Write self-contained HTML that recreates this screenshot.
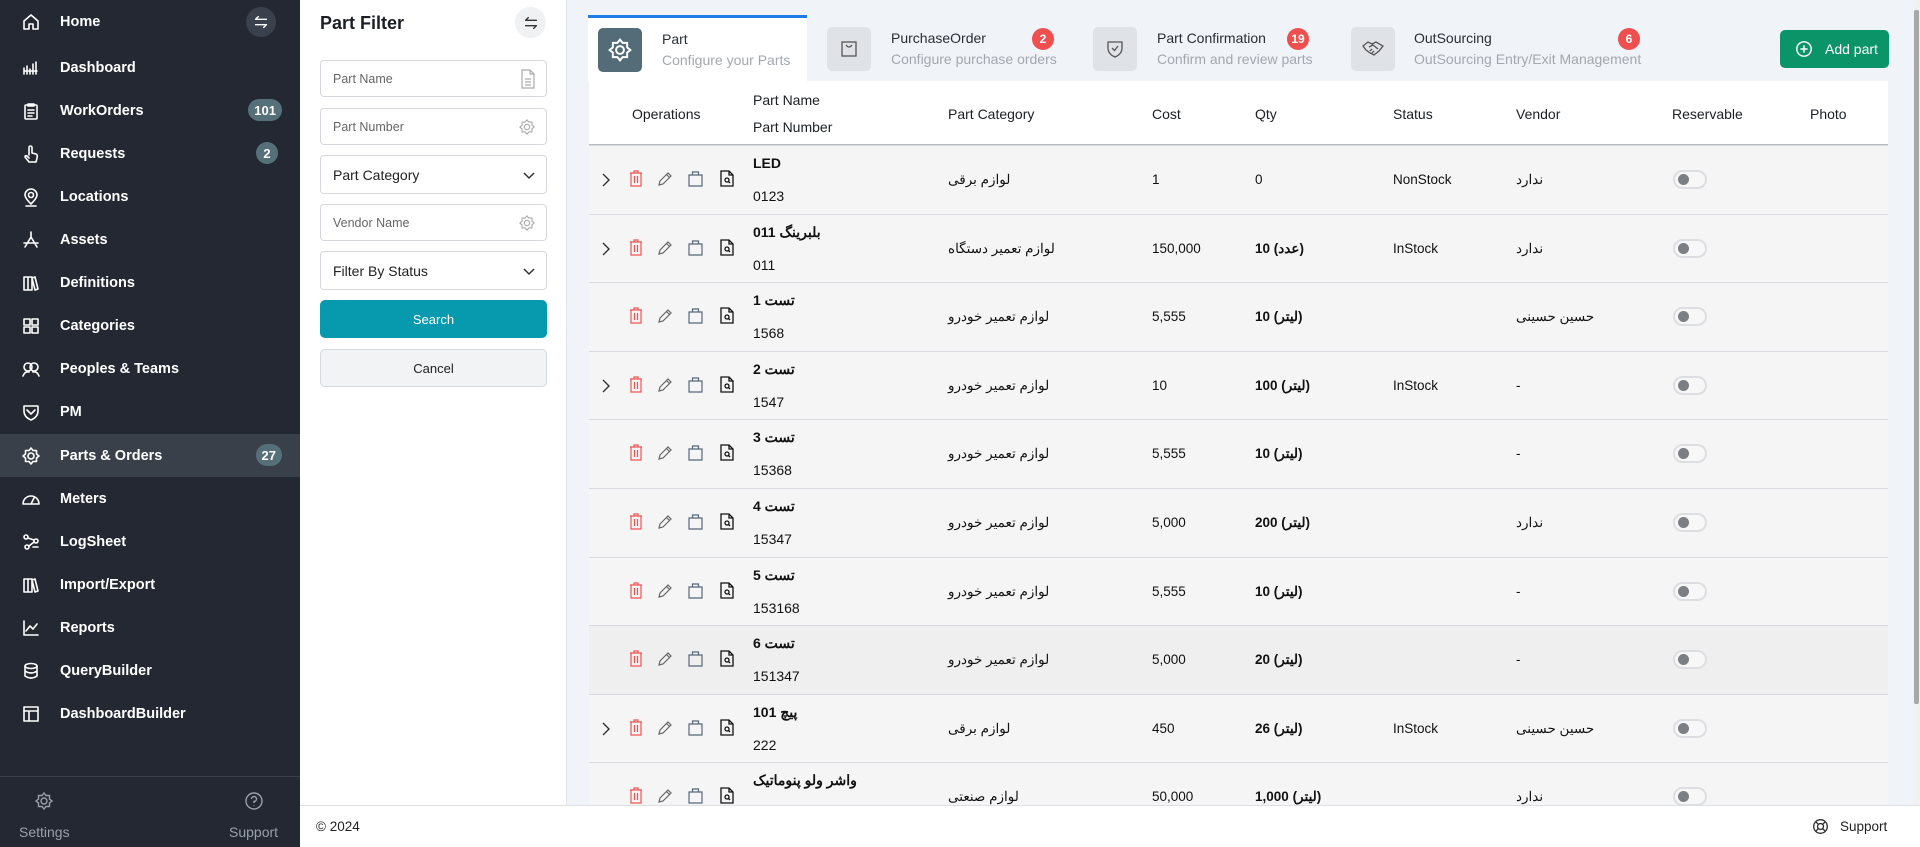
<!DOCTYPE html>
<html><head><meta charset="utf-8">
<style>
*{box-sizing:border-box;margin:0;padding:0}
body{width:1920px;height:847px;overflow:hidden;font-family:"Liberation Sans","Noto Sans CJK SC",sans-serif;background:#f0f3f8;position:relative;color:#111}
.abs{position:absolute}
#side{left:0;top:0;width:300px;height:847px;background:#232833;color:#fff}
.si{position:absolute;left:0;width:300px;height:43px;display:flex;align-items:center;font-weight:bold;font-size:14.5px}
.si svg{position:absolute;left:21px;width:20px;height:20px;fill:none;stroke:#fff;stroke-width:1.6;stroke-linecap:round;stroke-linejoin:round}
.si span.t{position:absolute;left:60px}
.badge{position:absolute;right:22px;height:22px;min-width:22px;border-radius:11px;background:#56707a;color:#fff;font-size:13px;font-weight:bold;display:flex;align-items:center;justify-content:center;padding:0 6px}
#filter{left:300px;top:0;width:267px;height:805px;background:#fff;border-right:1px solid #e3e6ea}
.inp{position:absolute;left:20px;width:227px;border:1px solid #d5d8dc;border-radius:4px;background:#fff;font-size:12.5px;color:#666;display:flex;align-items:center;padding-left:12px}
.sel{font-size:14px;color:#222}
.inp svg{position:absolute;right:10px}
.tab{position:absolute;top:16px;height:66px}
.ib{position:absolute;top:11px;width:44px;height:44px;border-radius:5px;background:#dfe2e7;display:flex;align-items:center;justify-content:center}
.tt{position:absolute;top:14px;font-size:14px;color:#2a2f36}
.ts{position:absolute;top:35px;font-size:14px;color:#a3a8ae;white-space:nowrap}
.rb{position:absolute;top:12px;width:22px;height:22px;border-radius:11px;background:#ef4f4f;color:#fff;font-size:12px;font-weight:bold;display:flex;align-items:center;justify-content:center}
#table{left:589px;top:81px;width:1299px;height:724px;background:#fff;overflow:hidden}
.th{position:absolute;font-size:14px;color:#1b1f24}
.row{position:absolute;left:0;width:1299px;height:69px;background:#f5f5f6;border-top:1px solid #d9dbe0;font-size:13.5px}
.row .c{position:absolute;top:26px;white-space:nowrap}
.row .nm{position:absolute;left:164px;top:9px;font-weight:bold;font-size:14px;white-space:nowrap}
.row .nb{position:absolute;left:164px;top:42px;font-size:14px}
.ic{position:absolute;top:24px}
.tog{position:absolute;left:1084px;top:24px;width:34px;height:19px;border:2px solid #dcdee2;border-radius:10px;background:#f7f7f7}
.tog:after{content:"";position:absolute;left:3px;top:2px;width:11px;height:11px;border-radius:6px;background:#7b7e83}
.in{display:inline-block}
</style></head><body>

<div id="side" class="abs">
 <div class="si" style="top:0"><svg viewBox="0 0 20 20"><path d="M3 9L10 3L17 9V17H12V12H8V17H3Z"/></svg><span class="t">Home</span>
  <div class="abs" style="left:246px;top:7px;width:30px;height:30px;border-radius:15px;background:#3b414c;display:flex;align-items:center;justify-content:center"><svg viewBox="0 0 20 20" style="position:static;width:18px;height:18px"><path d="M4 7H16M4 7L7 4M16 13H4M16 13L13 16"/></svg></div></div>
 <div class="si" style="top:46px"><svg viewBox="0 0 20 20"><path d="M3 16V10M6 16V8M9 16V11M12 16V6M15 16V4M3 13H16"/></svg><span class="t">Dashboard</span></div>
 <div class="si" style="top:89px"><svg viewBox="0 0 20 20"><rect x="4" y="4" width="12" height="14" rx="1"/><path d="M7 3H13V5H7ZM7 9H13M7 12H13M7 15H11"/></svg><span class="t">WorkOrders</span><div class="badge" style="top:10px;right:18px">101</div></div>
 <div class="si" style="top:132px"><svg viewBox="0 0 20 20"><path d="M8 11V3.5A1.5 1.5 0 0 1 11 3.5V9L15 10Q17 11 16 14L15 18H8L4 13Q4 11 6 12L8 14"/></svg><span class="t">Requests</span><div class="badge" style="top:10px">2</div></div>
 <div class="si" style="top:175px"><svg viewBox="0 0 20 20"><path d="M10 17Q4 11 4 8A6 6 0 0 1 16 8Q16 11 10 17ZM5 19H15"/><circle cx="10" cy="8" r="2.5"/></svg><span class="t">Locations</span></div>
 <div class="si" style="top:218px"><svg viewBox="0 0 20 20"><path d="M10 2V7M10 7L4 17M10 7L16 17M3 13H17"/></svg><span class="t">Assets</span></div>
 <div class="si" style="top:261px"><svg viewBox="0 0 20 20"><path d="M3 4H7V17H3ZM7 4H11V17H7ZM11 5L14 4L17 16L14 17Z"/></svg><span class="t">Definitions</span></div>
 <div class="si" style="top:304px"><svg viewBox="0 0 20 20"><rect x="3" y="3" width="6" height="6"/><rect x="11" y="3" width="6" height="6"/><rect x="3" y="11" width="6" height="6"/><rect x="11" y="11" width="6" height="6"/></svg><span class="t">Categories</span></div>
 <div class="si" style="top:347px"><svg viewBox="0 0 20 20"><circle cx="7" cy="8" r="4"/><circle cx="13" cy="8" r="4"/><path d="M2 17Q4 12 8 13M18 17Q16 12 12 13"/></svg><span class="t">Peoples &amp; Teams</span></div>
 <div class="si" style="top:390px"><svg viewBox="0 0 20 20"><path d="M3 4H17V9Q17 15 10 18Q3 15 3 9ZM6 8L10 12L14 8"/></svg><span class="t">PM</span></div>
 <div class="si" style="top:434px;background:#3a404a"><svg viewBox="0 0 20 20"><circle cx="10" cy="10" r="3"/><path d="M10 2L12 4.5L15.5 4.5L15.5 8L18 10L15.5 12L15.5 15.5L12 15.5L10 18L8 15.5L4.5 15.5L4.5 12L2 10L4.5 8L4.5 4.5L8 4.5Z"/></svg><span class="t">Parts &amp; Orders</span><div class="badge" style="top:10px;right:18px">27</div></div>
 <div class="si" style="top:477px"><svg viewBox="0 0 20 20"><path d="M2 15A8 8 0 0 1 18 15ZM10 15L13 9"/></svg><span class="t">Meters</span></div>
 <div class="si" style="top:520px"><svg viewBox="0 0 20 20"><circle cx="5" cy="5" r="2"/><circle cx="15" cy="9" r="2"/><circle cx="6" cy="15" r="2"/><path d="M7 6L13 8M13 10L8 14M12 15H17"/></svg><span class="t">LogSheet</span></div>
 <div class="si" style="top:563px"><svg viewBox="0 0 20 20"><path d="M3 4H7V17H3ZM7 4H11V17H7ZM11 5L14 4L17 16L14 17Z"/></svg><span class="t">Import/Export</span></div>
 <div class="si" style="top:606px"><svg viewBox="0 0 20 20"><path d="M3 3V17H17M5 13L9 8L12 11L16 6"/></svg><span class="t">Reports</span></div>
 <div class="si" style="top:649px"><svg viewBox="0 0 20 20"><ellipse cx="10" cy="5" rx="6" ry="2.5"/><path d="M4 5V15Q10 19 16 15V5M4 10Q10 14 16 10"/></svg><span class="t">QueryBuilder</span></div>
 <div class="si" style="top:692px"><svg viewBox="0 0 20 20"><rect x="3" y="3" width="14" height="14"/><path d="M3 7H17M8 7V17"/></svg><span class="t">DashboardBuilder</span></div>
 <div class="abs" style="left:0;top:776px;width:300px;border-top:1px solid #3a404b"></div>
 <svg class="abs" viewBox="0 0 20 20" style="left:34px;top:791px;width:20px;height:20px;fill:none;stroke:#9aa0a8;stroke-width:1.4"><circle cx="10" cy="10" r="3"/><path d="M10 2L12 4.5L15.5 4.5L15.5 8L18 10L15.5 12L15.5 15.5L12 15.5L10 18L8 15.5L4.5 15.5L4.5 12L2 10L4.5 8L4.5 4.5L8 4.5Z"/></svg>
 <svg class="abs" viewBox="0 0 20 20" style="left:244px;top:791px;width:20px;height:20px;fill:none;stroke:#9aa0a8;stroke-width:1.4"><circle cx="10" cy="10" r="8"/><path d="M7.5 8A2.5 2.5 0 1 1 10 10.5V12M10 14.5V15"/></svg>
 <div class="abs" style="left:19px;top:824px;font-size:14px;color:#9aa0a8">Settings</div>
 <div class="abs" style="left:229px;top:824px;font-size:14px;color:#9aa0a8">Support</div>
</div>

<div id="filter" class="abs">
 <div class="abs" style="left:20px;top:13px;font-size:18px;font-weight:bold;color:#1b1f24">Part Filter</div>
 <div class="abs" style="left:215px;top:7px;width:31px;height:31px;border-radius:16px;background:#f0f1f3;display:flex;align-items:center;justify-content:center"><svg width="18" height="18" viewBox="0 0 20 20" fill="none" stroke="#333" stroke-width="1.5" stroke-linecap="round"><path d="M4 7H16M4 7L7 4M16 13H4M16 13L13 16"/></svg></div>
 <div class="inp" style="top:60px;height:37px">Part Name<svg width="16" height="20" viewBox="0 0 16 20" fill="none" stroke="#aaa" stroke-width="1.2"><path d="M2 1H10L14 5V19H2ZM10 1V5H14M5 10H11M5 13H11M5 16H11"/></svg></div>
 <div class="inp" style="top:108px;height:37px">Part Number<svg width="18" height="18" viewBox="0 0 20 20" fill="none" stroke="#aaa" stroke-width="1.2"><circle cx="10" cy="10" r="3"/><path d="M10 2L12 4.5L15.5 4.5L15.5 8L18 10L15.5 12L15.5 15.5L12 15.5L10 18L8 15.5L4.5 15.5L4.5 12L2 10L4.5 8L4.5 4.5L8 4.5Z"/></svg></div>
 <div class="inp sel" style="top:155px;height:39px">Part Category<svg width="14" height="14" viewBox="0 0 14 14" fill="none" stroke="#333" stroke-width="1.5"><path d="M2 5L7 10L12 5"/></svg></div>
 <div class="inp" style="top:204px;height:37px">Vendor Name<svg width="18" height="18" viewBox="0 0 20 20" fill="none" stroke="#aaa" stroke-width="1.2"><circle cx="10" cy="10" r="3"/><path d="M10 2L12 4.5L15.5 4.5L15.5 8L18 10L15.5 12L15.5 15.5L12 15.5L10 18L8 15.5L4.5 15.5L4.5 12L2 10L4.5 8L4.5 4.5L8 4.5Z"/></svg></div>
 <div class="inp sel" style="top:251px;height:39px">Filter By Status<svg width="14" height="14" viewBox="0 0 14 14" fill="none" stroke="#333" stroke-width="1.5"><path d="M2 5L7 10L12 5"/></svg></div>
 <div class="abs" style="left:20px;top:300px;width:227px;height:38px;border-radius:5px;background:#0799ad;color:#fff;font-size:13px;display:flex;align-items:center;justify-content:center">Search</div>
 <div class="abs" style="left:20px;top:349px;width:227px;height:38px;border-radius:5px;background:#f2f3f5;border:1px solid #d5d8dc;color:#222;font-size:13px;display:flex;align-items:center;justify-content:center">Cancel</div>
</div>

<!-- tabs -->
<div class="tab" style="left:588px;width:219px;background:#fff;border-top:3px solid #1d7fe6;height:66px;top:15px">
 <div class="ib" style="left:10px;top:10px;background:#536c78"><svg width="26" height="26" viewBox="0 0 20 20" fill="none" stroke="#fff" stroke-width="1.5"><circle cx="10" cy="10" r="3"/><path d="M10 2L12 4.5L15.5 4.5L15.5 8L18 10L15.5 12L15.5 15.5L12 15.5L10 18L8 15.5L4.5 15.5L4.5 12L2 10L4.5 8L4.5 4.5L8 4.5Z"/></svg></div>
 <div class="tt" style="left:74px;top:13px">Part</div><div class="ts" style="left:74px;top:34px">Configure your Parts</div>
</div>
<div class="tab" style="left:827px;width:240px">
 <div class="ib" style="left:0"><svg width="20" height="20" viewBox="0 0 20 20" fill="none" stroke="#555" stroke-width="1.3"><rect x="3" y="3" width="14" height="14"/><path d="M7 6Q10 10 13 6"/></svg></div>
 <div class="tt" style="left:64px">PurchaseOrder</div><div class="ts" style="left:64px">Configure purchase orders</div>
 <div class="rb" style="left:205px">2</div>
</div>
<div class="tab" style="left:1093px;width:240px">
 <div class="ib" style="left:0"><svg width="20" height="20" viewBox="0 0 20 20" fill="none" stroke="#555" stroke-width="1.3"><path d="M3 3H17V9Q17 15 10 18Q3 15 3 9ZM7 9L9.5 11.5L13 7"/></svg></div>
 <div class="tt" style="left:64px">Part Confirmation</div><div class="ts" style="left:64px">Confirm and review parts</div>
 <div class="rb" style="left:194px">19</div>
</div>
<div class="tab" style="left:1351px;width:300px">
 <div class="ib" style="left:0"><svg width="24" height="24" viewBox="0 0 24 24" fill="none" stroke="#555" stroke-width="1.3"><path d="M2 9L7 5L11 7L15 5L22 9L18 14L13 18L9 16L5 13ZM8 10L12 8L17 12M9 14L11 12M11 16L13 14"/></svg></div>
 <div class="tt" style="left:63px">OutSourcing</div><div class="ts" style="left:63px">OutSourcing Entry/Exit Management</div>
 <div class="rb" style="left:267px">6</div>
</div>
<div class="abs" style="left:1780px;top:30px;width:109px;height:38px;border-radius:5px;background:#0a9467;color:#fff;font-size:14px;display:flex;align-items:center"><svg class="abs" style="left:15px;top:10px" width="18" height="18" viewBox="0 0 20 20" fill="none" stroke="#fff" stroke-width="1.6"><circle cx="10" cy="10" r="8"/><path d="M10 6V14M6 10H14"/></svg><span class="abs" style="left:45px">Add part</span></div>

<div id="table" class="abs">
 <div class="th" style="left:43px;top:25px">Operations</div>
 <div class="th" style="left:164px;top:11px">Part Name</div>
 <div class="th" style="left:164px;top:38px">Part Number</div>
 <div class="th" style="left:359px;top:25px">Part Category</div>
 <div class="th" style="left:563px;top:25px">Cost</div>
 <div class="th" style="left:666px;top:25px">Qty</div>
 <div class="th" style="left:804px;top:25px">Status</div>
 <div class="th" style="left:927px;top:25px">Vendor</div>
 <div class="th" style="left:1083px;top:25px">Reservable</div>
 <div class="th" style="left:1221px;top:25px">Photo</div>
 <div class="abs" style="left:0;top:63px;width:1299px;border-top:2px solid #b8bcc2"></div>
 <div id="rows"></div>
</div>

<div class="abs" style="left:300px;top:805px;width:1620px;height:42px;background:#fff;border-top:1px solid #dcdfe3">
 <div class="abs" style="left:16px;top:13px;font-size:13.5px;color:#222">© 2024</div>
 <svg class="abs" style="left:1512px;top:12px" width="17" height="17" viewBox="0 0 20 20" fill="none" stroke="#333" stroke-width="1.6"><circle cx="10" cy="10" r="8"/><circle cx="10" cy="10" r="3.5"/><path d="M4.5 4.5L7.5 7.5M15.5 4.5L12.5 7.5M4.5 15.5L7.5 12.5M15.5 15.5L12.5 12.5"/></svg>
 <div class="abs" style="left:1540px;top:13px;font-size:13.5px;color:#222">Support</div>
</div>
<div class="abs" style="left:1913px;top:0;width:7px;height:805px;background:#f1f1f1"><div class="abs" style="left:1px;top:10px;width:5px;height:694px;background:#a8a8a8;border-radius:2px"></div></div>

<script>
var data=[
["LED",0,"0123","لوازم برقی","1","0","","NonStock","ندارد",1],
["بلبرینگ 011",1,"011","لوازم تعمیر دستگاه","150,000","10","(عدد)","InStock","ندارد",1],
["تست 1",1,"1568","لوازم تعمیر خودرو","5,555","10","(لیتر)","","حسین حسینی",0],
["تست 2",1,"1547","لوازم تعمیر خودرو","10","100","(لیتر)","InStock","-",1],
["تست 3",1,"15368","لوازم تعمیر خودرو","5,555","10","(لیتر)","","-",0],
["تست 4",1,"15347","لوازم تعمیر خودرو","5,000","200","(لیتر)","","ندارد",0],
["تست 5",1,"153168","لوازم تعمیر خودرو","5,555","10","(لیتر)","","-",0],
["تست 6",1,"151347","لوازم تعمیر خودرو","5,000","20","(لیتر)","","-",0],
["پیچ 101",1,"222","لوازم برقی","450","26","(لیتر)","InStock","حسین حسینی",1],
["واشر ولو پنوماتیک",1,"","لوازم صنعتی","50,000","1,000","(لیتر)","","ندارد",0]];
var trash='<svg width="14" height="17" viewBox="0 0 14 17" fill="none" stroke="#ef5350" stroke-width="1.2"><path d="M1 3H13M5 3V1H9V3M2 3V16H12V3M5.5 6V13M8.5 6V13"/></svg>';
var pen='<svg width="17" height="17" viewBox="0 0 17 17" fill="none" stroke="#666" stroke-width="1.2"><path d="M3 11L11 3L14 6L6 14L2 15ZM9.5 4.5L12.5 7.5"/></svg>';
var bag='<svg width="17" height="17" viewBox="0 0 17 17" fill="none" stroke="#58687a" stroke-width="1.2"><path d="M2 5H15V16H2ZM5.5 5V2H11.5V5"/></svg>';
var doc='<svg width="14" height="17" viewBox="0 0 14 17" fill="none" stroke="#111" stroke-width="1.3"><path d="M1 1H9L13 5V16H1ZM9 1V5H13"/><circle cx="7" cy="10" r="2"/><path d="M8.5 11.5L10 13"/></svg>';
var chev='<svg width="10" height="16" viewBox="0 0 10 16" fill="none" stroke="#333" stroke-width="1.4"><path d="M2 2L8 8L2 14"/></svg>';
var h='';
data.forEach(function(d,i){
 var top=64+i*68.6;
 var bg=i==7?'#efefef':'#f5f5f6';
 var q=d[6]?'<span class="in">'+d[5]+'</span> <span class="in" dir="rtl">'+d[6]+'</span>':d[5];
 h+='<div class="row" style="top:'+top+'px;background:'+bg+'">'+
 (d[9]?'<div class="ic" style="left:12px;top:26px">'+chev+'</div>':'')+
 '<div class="ic" style="left:40px">'+trash+'</div><div class="ic" style="left:68px">'+pen+'</div><div class="ic" style="left:98px">'+bag+'</div><div class="ic" style="left:131px">'+doc+'</div>'+
 '<div class="nm"'+(d[1]?' dir="rtl"':'')+'>'+d[0]+'</div><div class="nb">'+d[2]+'</div>'+
 '<div class="c" style="left:359px" dir="rtl">'+d[3]+'</div>'+
 '<div class="c" style="left:563px">'+d[4]+'</div>'+
 '<div class="c" style="left:666px;'+(d[6]?'font-weight:bold':'')+'">'+q+'</div>'+
 '<div class="c" style="left:804px">'+d[7]+'</div>'+
 '<div class="c" style="left:927px">'+d[8]+'</div>'+
 '<div class="tog"></div></div>';
});
document.getElementById('rows').innerHTML=h;
</script>
</body></html>
